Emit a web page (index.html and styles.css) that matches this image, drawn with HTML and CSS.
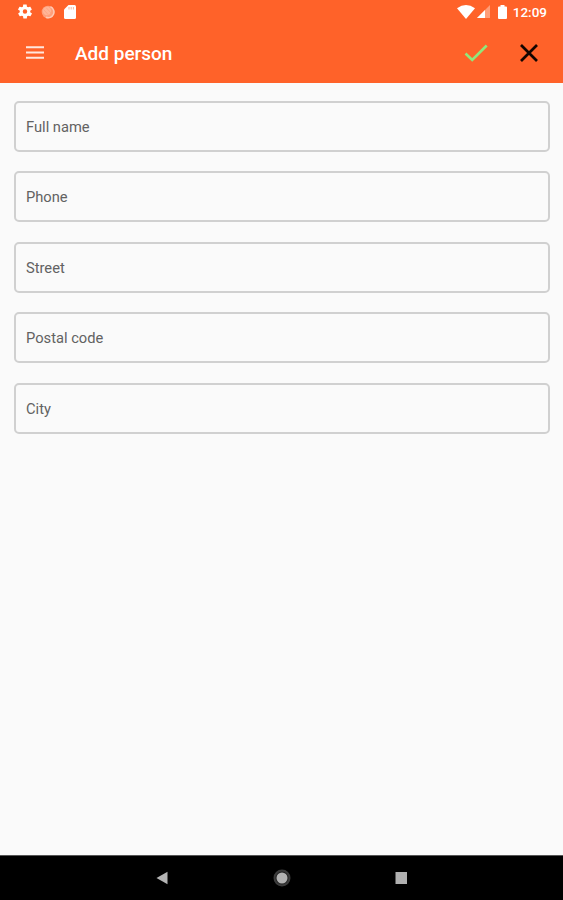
FILE: index.html
```html
<!DOCTYPE html>
<html lang="en">
<head>
    <meta charset="utf-8">
    <title>Add person</title>
    <link rel="stylesheet" href="styles.css">
</head>
<body>
    <header class="header">
        <div class="status-bar">
            <div class="status-left">
                <svg width="14" height="15" viewBox="2 2 20 20"><path fill="#fff" d="M19.4 13c0-.3.1-.6.1-1s0-.7-.1-1l2.1-1.600c.2-.2.2-.4.1-.6l-2-3.500c-.1-.2-.4-.3-.6-.2l-2.500 1c-.5-.4-1.100-.7-1.700-1l-.4-2.600c0-.2-.2-.4-.5-.4h-4c-.2 0-.4.2-.5.4l-.4 2.600c-.6.3-1.200.6-1.700 1l-2.500-1c-.2-.1-.5 0-.6.2l-2 3.500c-.1.200-.1.500.1.600L4.600 11c0 .3-.1.700-.1 1s0 .7.100 1l-2.100 1.600c-.2.2-.2.400-.1.600l2 3.500c.1.200.4.300.6.200l2.500-1c.5.4 1.100.7 1.700 1l.4 2.600c0 .2.200.4.500.4h4c.2 0 .5-.2.500-.4l.4-2.600c.6-.3 1.200-.6 1.700-1l2.500 1c.2.100.5 0 .6-.2l2-3.500c.1-.2.100-.5-.1-.6zM12 15.200a3.200 3.200 0 1 1 0-6.400 3.200 3.200 0 0 1 0 6.400z"/></svg>
                <svg width="14" height="14" viewBox="0 0 14 14"><circle cx="7" cy="7" r="6.300" fill="#ff9f7b"/><path fill="none" stroke="#ffc9b4" stroke-width="1.500" d="M9.500 1.800A5.700 5.700 0 0 1 5 12.300"/><circle cx="6" cy="6" r="4.200" fill="#ffb597"/><path d="M2.500 4.500l5 5.500M5 2.500l5 5.500" stroke="#ff9f7b" stroke-width=".7"/></svg>
                <svg width="12" height="14" viewBox="0 0 12 14"><path fill="#fff" d="M4.500 0H10.500Q12 0 12 1.500V12.500Q12 14 10.500 14H1.500Q0 14 0 12.500V4.500z"/><path stroke="#ffb496" d="M5 2v2.500M7.200 2v2.500M9.400 2v2.500"/></svg>
            </div>
            <div class="status-right">
                <svg class="wifi" width="18" height="14" viewBox="0 0 18 14"><path fill="#fff" d="M0 3.300Q9-3.300 18 3.300L9 14z"/></svg>
                <svg class="signal" width="13" height="13" viewBox="0 0 13 13"><path fill="#ff9d78" d="M13 0v13H0z"/><path fill="#fff" d="M8 5v8H0z"/></svg>
                <svg class="battery" width="9" height="14" viewBox="0 0 9 14"><path fill="#fff" d="M2.500 0h4v1.500H8q1 0 1 1V13q0 1-1 1H1q-1 0-1-1V2.500q0-1 1-1h1.500z"/></svg>
                <span class="clock">12:09</span>
            </div>
        </div>
        <div class="app-bar">
            <svg width="18" height="13" viewBox="0 0 18 13"><path stroke="#ffe7de" stroke-width="2" d="M0 1.200h18M0 6.500h18M0 11.800h18"/></svg>
            <h1 class="title">Add person</h1>
            <svg class="save" width="24" height="18" viewBox="0 0 24 18"><path fill="none" stroke="#91e77b" stroke-width="2.600" d="M1.500 9.500l6.700 6.500L22.700 1.500"/></svg>
            <svg width="20" height="20" viewBox="0 0 20 20"><path stroke="#140500" stroke-width="2.700" d="M2 2l16 16M18 2L2 18"/></svg>
        </div>
    </header>

    <main class="form">
        <div class="field">Full name</div>
        <div class="field">Phone</div>
        <div class="field">Street</div>
        <div class="field">Postal code</div>
        <div class="field">City</div>
    </main>

    <footer class="nav-bar">
        <svg width="18" height="18" viewBox="0 0 18 18"><path fill="#b4b4b4" d="M14.500 2.700v12.600L3.500 9z"/></svg>
        <svg width="18" height="18" viewBox="0 0 18 18"><circle cx="9" cy="9" r="7.500" fill="#222" stroke="#3c3c3c" stroke-width="2"/><circle cx="9" cy="9" r="5.500" fill="#b2b2b2"/></svg>
        <svg width="18" height="18" viewBox="0 0 18 18"><path fill="#b0b0b0" d="M3.500 3h11.500v12H3.500z"/></svg>
    </footer>
</body>
</html>
```

FILE: styles.css
```css
* {
    box-sizing: border-box;
}

body {
    display: flex;
    flex-direction: column;
    height: 900px;
    margin: 0;
    background-color: #fafafa;
    font-family: Roboto, Arial, sans-serif;
}

svg {
    display: block;
    flex: none;
}

.header {
    height: 82.5px;
    background-color: #ff6229;
}

.status-bar {
    display: flex;
    justify-content: space-between;
    height: 23px;
    padding: 0 16px 0 18px;
}

.status-left,
.status-right {
    display: flex;
    align-items: center;
}

.status-left {
    gap: 9px;
}

.signal {
    margin-left: 2px;
}

.battery {
    margin-left: 8px;
}

.clock {
    margin-left: 6px;
    color: #fff;
    font-size: 13.5px;
    font-weight: 500;
    line-height: 24px;
}

.app-bar {
    display: flex;
    align-items: center;
    height: 59px;
    padding: 0 24px 0 26px;
}

.title {
    margin: 2px 0 0 31px;
    color: #fff;
    font-size: 19px;
    font-weight: 500;
}

.save {
    margin-left: auto;
    margin-right: 31px;
}

.form {
    display: flex;
    flex: 1;
    flex-direction: column;
    gap: 19.4px;
    padding: 18.5px 13px 0 14px;
}

.field {
    height: 51px;
    padding-left: 10px;
    border: 2px solid #d0d0d0;
    border-radius: 5px;
    color: #626262;
    font-size: 14.7px;
    line-height: 48px;
}

.nav-bar {
    display: flex;
    align-items: center;
    justify-content: center;
    gap: 101.5px;
    height: 45px;
    border-top: 1px solid #555;
    background-color: #000;
}
```
